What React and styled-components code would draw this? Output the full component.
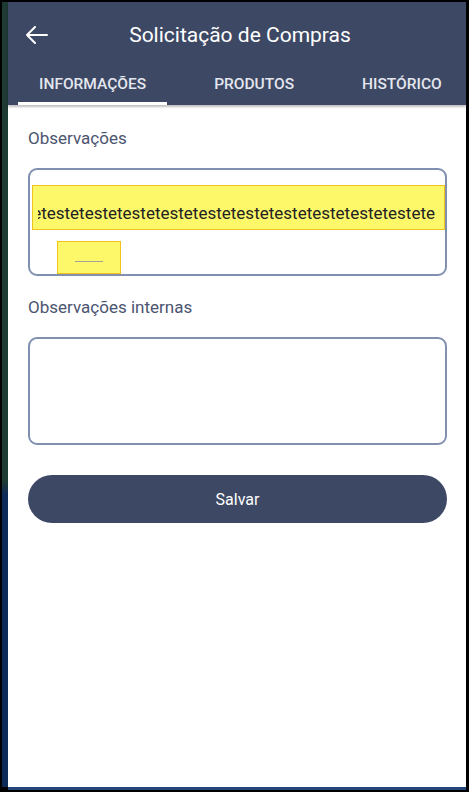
import React from "react";
import styled, { createGlobalStyle } from "styled-components";

const GlobalStyle = createGlobalStyle`
  html, body {
    margin: 0;
    padding: 0;
    background: #000;
    font-family: Roboto, "Liberation Sans", sans-serif;
  }
`;

const Frame = styled.div`
  display: flex;
  width: 469px;
  height: 792px;
  background: #000;
  padding-top: 2px;
  box-sizing: border-box;
`;

const LeftEdge = styled.div`
  width: 6px;
  margin-left: 2px;
  height: 785px;
  background: linear-gradient(#1d3a33 0, #1d3a33 480px, #0e2a58 492px, #0e2a58 100%);
`;

const Screen = styled.div`
  width: 458px;
  height: 788px;
  display: flex;
  flex-direction: column;
  background: #fff;
  border-bottom: 3px solid #23477a;
  box-sizing: border-box;
`;

const Header = styled.header`
  background: #3d4864;
  box-shadow: 0 2px 2px rgba(0, 0, 0, 0.25);
  position: relative;
  z-index: 1;
`;

const TitleRow = styled.div`
  height: 66px;
  display: grid;
  grid-template-columns: 56px 1fr 56px;
  align-items: center;
`;

const BackButton = styled.div`
  display: flex;
  align-items: center;
  padding-left: 17px;
`;

const Title = styled.h1`
  margin: 0;
  color: #fff;
  font-size: 21px;
  font-weight: 400;
  text-align: center;
  padding-left: 6px;
`;

const Tabs = styled.nav`
  display: flex;
  gap: 26px;
  padding-left: 10px;
  height: 37px;
`;

const Tab = styled.div`
  display: flex;
  align-items: center;
  justify-content: center;
  padding: 0 21px 3px;
  color: #e4e7ee;
  font-size: 15.5px;
  font-weight: 500;
  text-transform: uppercase;
  border-bottom: 3px solid ${(p) => (p.$active ? "#fff" : "transparent")};
`;

const Content = styled.main`
  display: flex;
  flex-direction: column;
  padding: 21px 19px 0 20px;
`;

const Label = styled.label`
  color: #4b5470;
  font-size: 17px;
  line-height: 24px;
  margin-bottom: 18px;
`;

const TextBox = styled.div`
  height: 108px;
  border: 2px solid #8290b0;
  border-radius: 9px;
  box-sizing: border-box;
  margin-bottom: 19px;
  overflow: hidden;
  display: flex;
  flex-direction: column;
`;

const Highlight = styled.div`
  background: #fdf86a;
  border: 1.5px solid #f2c21c;
  box-sizing: border-box;
`;

const TextLine = styled(Highlight)`
  margin: 15px 0 0 2px;
  height: 45px;
  display: flex;
  align-items: center;
  padding: 10px 9px 0 5px;
`;

const ScrolledText = styled.div`
  flex: 1;
  display: flex;
  justify-content: flex-end;
  overflow: hidden;
  white-space: nowrap;
  color: #222;
  font-size: 17px;
`;

const CursorMark = styled(Highlight)`
  margin: 11px 0 0 27px;
  width: 64px;
  flex: 1;
  display: flex;
  align-items: center;
  justify-content: center;
  padding-top: 8px;
`;

const Dash = styled.div`
  width: 28px;
  height: 1.5px;
  background: #a3a39a;
`;

const SaveButton = styled.button`
  margin-top: 11px;
  height: 48px;
  border: none;
  border-radius: 24px;
  background: #3d4864;
  color: #fff;
  font-family: Roboto, "Liberation Sans", sans-serif;
  font-size: 16px;
`;

const ArrowIcon = () => (
  <svg width="24" height="18" viewBox="0 0 24 18" fill="none">
    <path d="M22 9H2M10 1L2 9l8 8" stroke="#fff" strokeWidth="2" strokeLinecap="round" strokeLinejoin="round" />
  </svg>
);

const tabs = ["Informações", "Produtos", "Histórico"];

export default function App() {
  const text = "testetestetestetestetestetestetestetestetestetestetestetestetestetestete";
  return (
    <>
      <GlobalStyle />
      <Frame>
        <LeftEdge />
        <Screen>
          <Header>
            <TitleRow>
              <BackButton>
                <ArrowIcon />
              </BackButton>
              <Title>Solicitação de Compras</Title>
              <div />
            </TitleRow>
            <Tabs>
              {tabs.map((t, i) => (
                <Tab key={t} $active={i === 0}>
                  {t}
                </Tab>
              ))}
            </Tabs>
          </Header>
          <Content>
            <Label>Observações</Label>
            <TextBox>
              <TextLine>
                <ScrolledText>{text}</ScrolledText>
              </TextLine>
              <CursorMark>
                <Dash />
              </CursorMark>
            </TextBox>
            <Label>Observações internas</Label>
            <TextBox />
            <SaveButton>Salvar</SaveButton>
          </Content>
        </Screen>
      </Frame>
    </>
  );
}
